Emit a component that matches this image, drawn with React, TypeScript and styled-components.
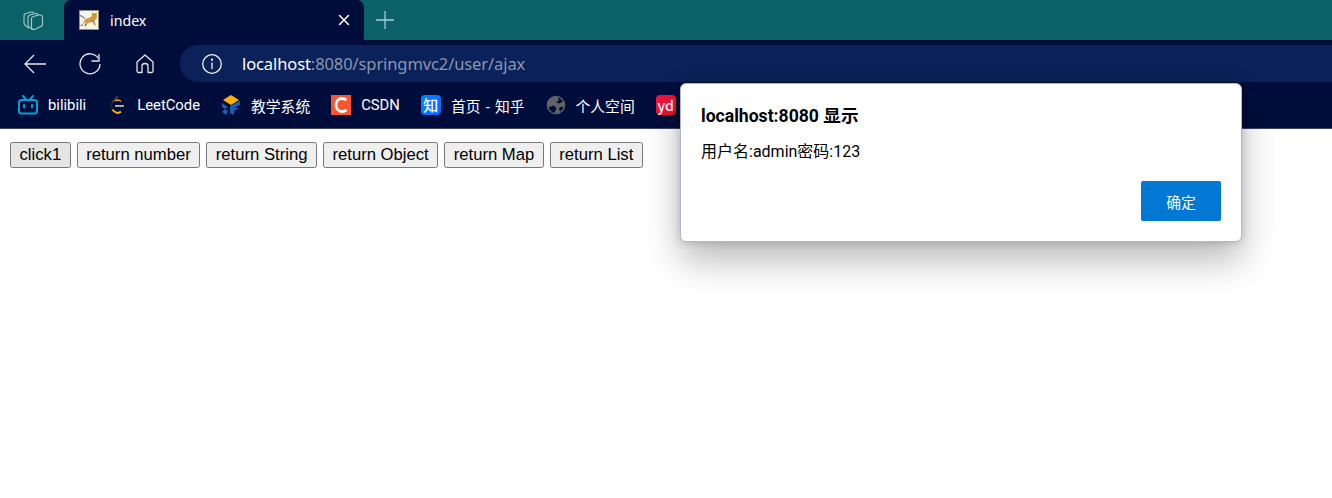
import React from "react";
import styled, { createGlobalStyle } from "styled-components";

const Global = createGlobalStyle`
  html, body { margin: 0; padding: 0; background: #fff; overflow: hidden; }
  #root { width: 1332px; height: 498px; }
`;

const UI = `"Noto Sans", "Noto Sans CJK SC", sans-serif`;
const MIXED = `Roboto, "Noto Sans CJK SC", sans-serif`;
const CJK = `"Noto Sans CJK SC", "Noto Sans", sans-serif`;

const Screen = styled.div`
  position: relative;
  width: 1332px;
  height: 498px;
  overflow: hidden;
  background: #fff;
`;
const Chrome = styled.header`
  background: #000d3a;
  height: 129px;
  border-bottom: 1px solid #3a4560;
  box-sizing: border-box;
`;
const TabStrip = styled.div`
  height: 40px;
  background: #0a6167;
  display: flex;
  align-items: stretch;
`;
const WorkspaceSlot = styled.div`
  width: 64px;
  padding-left: 2px;
  box-sizing: border-box;
  display: flex;
  align-items: center;
  justify-content: center;
`;
const Tab = styled.div`
  width: 300px;
  background: #000d3a;
  border-radius: 7px 7px 0 0;
  display: flex;
  align-items: center;
  padding: 0 14px 0 15px;
  box-sizing: border-box;
  color: #fff;
  font: 400 14.2px ${UI};
`;
const TabTitle = styled.span`
  margin-left: 11px;
  flex: 1;
`;
const NewTab = styled.div`
  width: 42px;
  display: flex;
  align-items: center;
  justify-content: center;
`;
const Toolbar = styled.div`
  height: 48px;
  display: flex;
  align-items: center;
  padding: 0 0 1px 7px;
  box-sizing: border-box;
`;
const NavButton = styled.div`
  width: 55px;
  height: 36px;
  display: flex;
  align-items: center;
  justify-content: center;
`;
const AddressBar = styled.div`
  margin-left: 8px;
  flex: 1;
  height: 37px;
  border-radius: 18px 0 0 18px;
  background: #0a2259;
  display: flex;
  align-items: center;
  padding-left: 22px;
  font: 400 16.5px ${UI};
  color: #8d95ab;
`;
const Url = styled.span`
  margin-left: 20px;
  letter-spacing: -0.1px;
`;
const Host = styled.span`
  color: #fff;
`;
const Bookmarks = styled.nav`
  height: 40px;
  display: flex;
  align-items: center;
  gap: 21px;
  padding: 0 0 6px 18px;
  box-sizing: border-box;
`;
const Bookmark = styled.div`
  display: flex;
  align-items: center;
  gap: 10px;
  color: #fff;
  font: 400 14.8px ${MIXED};
  word-spacing: 1.5px;
  white-space: nowrap;
`;
const Page = styled.main`
  padding: 13px 10px;
  display: flex;
  gap: 6px;
`;
const PageButton = styled.button<{ $focused?: boolean }>`
  height: 26px;
  padding: 0 8.5px;
  box-sizing: border-box;
  border: 1px solid #767676;
  border-radius: 2.5px;
  background: ${(p) => (p.$focused ? "#e5e5e5" : "#efefef")};
  color: #000;
  font: 400 16.67px "Liberation Sans", Arial, sans-serif;
`;
const Dialog = styled.div`
  position: absolute;
  left: 680px;
  top: 83px;
  width: 562px;
  height: 159px;
  box-sizing: border-box;
  background: #fff;
  border: 1px solid #b4b8c4;
  border-radius: 6px;
  box-shadow: 0 18px 36px rgba(0, 0, 0, 0.28), 0 0 8px rgba(0, 0, 0, 0.18);
  padding: 20px 20px 20px 20px;
  display: flex;
  flex-direction: column;
`;
const DialogTitle = styled.div`
  font: 700 17.6px/24px ${MIXED};
  color: #000;
`;
const DialogText = styled.div`
  margin-top: 13px;
  font: 400 16px/22px ${MIXED};
  color: #000;
`;
const DialogFooter = styled.div`
  margin-top: auto;
  display: flex;
  justify-content: flex-end;
`;
const OkButton = styled.button`
  width: 80px;
  height: 40px;
  border: none;
  border-radius: 2px;
  background: #0078d4;
  color: #fff;
  font: 400 14.8px ${CJK};
`;
const BadgeBox = styled.span<{ $bg: string; $size?: number }>`
  width: 20px;
  height: 20px;
  border-radius: 4px;
  background: ${(p) => p.$bg};
  color: #fff;
  display: inline-flex;
  align-items: center;
  justify-content: center;
  font: 500 ${(p) => p.$size ?? 15}px/20px ${CJK};
`;

const Workspace = () => (
  <svg width="22" height="22" viewBox="0 0 22 22" fill="none" stroke="#a9c9cb" strokeWidth="1.1" strokeLinecap="round">
    <path d="M6.500 19 3.500 16.500C2.500 15.700 2 14.700 2 13.500V7c0-1.500 1-2.500 2.500-2.800L9.500 3c1-.2 1.800.2 2.300 1" />
    <path d="M10 20.300 7.500 18.200C6.500 17.400 6 16.400 6 15.200V8.500C6 7 7 6 8.500 5.700l5-1.200c1-.2 1.800.2 2.300 1" />
    <path d="M9.500 10c0-1.500 1-2.500 2.500-2.800L17.500 6c1.600-.3 3 .7 3 2.300V15c0 1.500-1 2.500-2.500 2.800l-5.500 2.700c-1.600.3-3-.7-3-2.300z" />
  </svg>
);

const Tomcat = () => (
  <svg width="20" height="20" viewBox="0 0 20 20">
    <rect x="0.500" y="0.500" width="19" height="19" fill="#f5f3ea" stroke="#8c8c86" />
    <path d="M2.500 13.500c2.500-1 3-4.500 6.500-5.500 2-.5 3.200-.5 4-2.500l-.3-3.500 1.800 1.500h1.500l1.500-1.500.5 4c.2 2-1 3.500-2.500 4.500l1.500 5-2-.5-1.500-3.500-4.500 1.500-2.500 3-1-.5 1-3.500-2.500.5z" fill="#cf9c3c" />
    <path d="M1.500 15.500c1.500 0 2.500-1 3-2M1 5.500c2 1 4 1.500 5 3.500M14 4.500h.6M16 4.500h.6" stroke="#444" fill="none" strokeWidth="0.900" />
    <path d="M12 11.500l2-.5M7 14l-1 2.500" stroke="#6b5020" fill="none" strokeWidth="0.800" />
  </svg>
);

const Close = () => (
  <svg width="12" height="12" viewBox="0 0 12 12" stroke="#fff" strokeWidth="1.500" strokeLinecap="round">
    <path d="M1.500 1.500l9 9M10.500 1.500l-9 9" />
  </svg>
);

const Plus = () => (
  <svg width="18" height="18" viewBox="0 0 18 18" stroke="#a6d0d2" strokeWidth="1.300">
    <path d="M9 0v18M0 9h18" />
  </svg>
);

const Back = () => (
  <svg width="22" height="20" viewBox="0 0 22 20" fill="none" stroke="#e6e8ee" strokeWidth="1.300">
    <path d="M1 10h21M10 1 1 10l9 9" />
  </svg>
);

const Reload = () => (
  <svg width="22" height="22" viewBox="0 0 22 22" fill="none" stroke="#e6e8ee" strokeWidth="1.300">
    <path d="M19.500 5.500A10 10 0 1 0 21 11" />
    <path d="M12.500 8h7.500V1" />
  </svg>
);

const Home = () => (
  <svg width="20" height="20" viewBox="0 0 20 20" fill="none" stroke="#e6e8ee" strokeWidth="1.300" strokeLinejoin="round">
    <path d="M10 1 2 8v9c0 1 .5 1.500 1.500 1.500H7V12c0-1.500 1-2.500 3-2.500s3 1 3 2.500v6.500h3.500c1 0 1.500-.5 1.500-1.500V8z" />
  </svg>
);

const Info = () => (
  <svg width="20" height="20" viewBox="0 0 20 20" fill="none" stroke="#f0f1f5" strokeWidth="1.300">
    <circle cx="10" cy="10" r="9.300" />
    <path d="M10 8.500V15" />
    <circle cx="10" cy="5.700" r="0.500" fill="#f0f1f5" />
  </svg>
);

const Bilibili = () => (
  <svg width="20" height="20" viewBox="0 0 20 20" fill="none" stroke="#00a1d6" strokeWidth="2">
    <rect x="1" y="5" width="18" height="13.500" rx="2.500" />
    <path d="M5 1l3 3.500M15 1l-3 3.500" strokeLinecap="round" />
    <path d="M6 10v2.500M14 10v2.500" strokeLinecap="round" />
  </svg>
);

const LeetCode = () => (
  <svg width="20" height="20" viewBox="0 0 20 20" fill="none">
    <path d="M11 1 5 8" stroke="#3a3a3a" strokeWidth="2" />
    <path d="M5.500 7.500c-2 2-2 5 0 7" stroke="#222" strokeWidth="2" />
    <path d="M5.500 14.500c2 3.500 6 4.500 8.500 2" stroke="#f5a623" strokeWidth="2" />
    <path d="M8 11h9" stroke="#a6aab4" strokeWidth="2" />
    <path d="M8 6c2-1.500 4-1.500 6 .5" stroke="#f5a623" strokeWidth="1.500" />
  </svg>
);

const Teaching = () => (
  <svg width="20" height="20" viewBox="0 0 20 20">
    <path d="M10 0l8 5-8 5-8-5z" fill="#f8b400" />
    <path d="M1 8l6 4-3 2 3 2-2 4-4-3 3-3-3-2z" fill="#1a5fb4" />
    <path d="M9 11l10-5v4l-6 3 5 0-5 3v4l-4-2z" fill="#1a5fb4" />
  </svg>
);

const Csdn = () => (
  <svg width="20" height="20" viewBox="0 0 20 20" fill="none">
    <rect width="20" height="20" fill="#fc5531" />
    <path d="M15.500 5.200C14 4 12.500 3.500 11 3.500c-3.500 0-6 2.800-6 6.500s2.500 6.500 6 6.500c1.500 0 3-.5 4.500-1.700" stroke="#fff" strokeWidth="2.800" />
  </svg>
);

const Globe = () => (
  <svg width="20" height="20" viewBox="0 0 20 20">
    <circle cx="10" cy="10" r="9.300" fill="#5f6368" />
    <path d="M12 2.500c2 .5 4 2 5 4l-4 2-3-1.500 3-1.500zM2.500 12.500l5-2 3 2.500-2 5c-3-.5-5-3-6-5.500zM14 12l3.500 0c-.5 2-2 3.500-3.500 4.500l-1-2.500z" fill="#000d3a" />
  </svg>
);

const items: { icon: React.ReactNode; label?: string }[] = [
  { icon: <Bilibili />, label: "bilibili" },
  { icon: <LeetCode />, label: "LeetCode" },
  { icon: <Teaching />, label: "教学系统" },
  { icon: <Csdn />, label: "CSDN" },
  { icon: <BadgeBox $bg="linear-gradient(135deg,#0a84ff,#0066ff)">知</BadgeBox>, label: "首页 - 知乎" },
  { icon: <Globe />, label: "个人空间" },
  { icon: <BadgeBox $bg="linear-gradient(135deg,#f5163f,#e60f2d)" $size={14}>yd</BadgeBox> },
];

const buttons = ["click1", "return number", "return String", "return Object", "return Map", "return List"];

export default function App() {
  return (
    <Screen>
      <Global />
      <Chrome>
        <TabStrip>
          <WorkspaceSlot>
            <Workspace />
          </WorkspaceSlot>
          <Tab>
            <Tomcat />
            <TabTitle>index</TabTitle>
            <Close />
          </Tab>
          <NewTab>
            <Plus />
          </NewTab>
        </TabStrip>
        <Toolbar>
          <NavButton>
            <Back />
          </NavButton>
          <NavButton>
            <Reload />
          </NavButton>
          <NavButton>
            <Home />
          </NavButton>
          <AddressBar>
            <Info />
            <Url>
              <Host>localhost</Host>:8080/springmvc2/user/ajax
            </Url>
          </AddressBar>
        </Toolbar>
        <Bookmarks>
          {items.map((b, i) => (
            <Bookmark key={i}>
              {b.icon}
              {b.label && <span>{b.label}</span>}
            </Bookmark>
          ))}
        </Bookmarks>
      </Chrome>
      <Page>
        {buttons.map((b, i) => (
          <PageButton key={b} $focused={i === 0}>
            {b}
          </PageButton>
        ))}
      </Page>
      <Dialog>
        <DialogTitle>localhost:8080 显示</DialogTitle>
        <DialogText>用户名:admin密码:123</DialogText>
        <DialogFooter>
          <OkButton>确定</OkButton>
        </DialogFooter>
      </Dialog>
    </Screen>
  );
}
